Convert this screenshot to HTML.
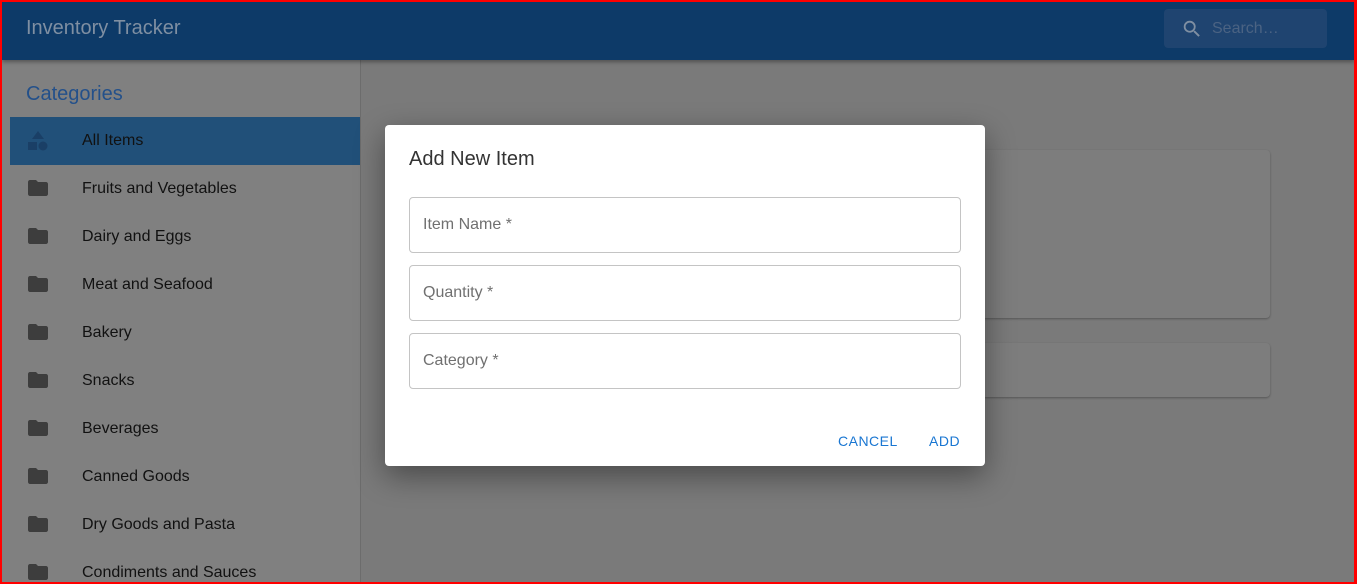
<!DOCTYPE html>
<html><head><style>
*{box-sizing:border-box;margin:0;padding:0}
body{width:1357px;height:584px;overflow:hidden;background:#fff;font-family:"Liberation Sans",sans-serif;position:relative}
.frame{position:absolute;inset:0;border:2px solid #f00;border-right-width:3px;z-index:10;pointer-events:none}
.page{position:absolute;left:2px;top:2px;width:1353px;height:580px;background:#7a7a7a;overflow:hidden}
.hdr{position:absolute;left:0;top:0;width:100%;height:58px;background:#0d3a68;box-shadow:0 2px 4px rgba(0,0,0,.35);z-index:2}
.hdr h1{position:absolute;left:24px;top:15px;font-size:20px;font-weight:normal;color:#7f8fa2}
.search{position:absolute;left:1162px;top:7px;width:163px;height:39px;background:#1f4470;border-radius:4px}
.search span{position:absolute;left:48px;top:11px;font-size:16px;color:#4b6383}
.search svg{position:absolute;left:17px;top:9px}
.side{position:absolute;left:0;top:58px;width:359px;height:530px;background:#808080;border-right:1px solid #6c6c6c}
.side h2{position:absolute;left:24px;top:23px;font-size:20px;font-weight:normal;color:#23508a}
.item{position:absolute;left:8px;width:350px;height:48px;font-size:16px;color:#111}
.item span{position:absolute;left:72px;top:15px}
.item svg{position:absolute;left:18px;top:15px}
.sel{background:#215079}
.card{position:absolute;background:#7d7d7d;border-radius:4px;box-shadow:0 1px 2px rgba(0,0,0,.3)}
.dlg{position:absolute;left:383px;top:123px;width:600px;height:341px;background:#fff;border-radius:4px;box-shadow:0 10px 30px rgba(0,0,0,.4);z-index:3}
.dlg h3{position:absolute;left:24px;top:23px;font-size:20px;font-weight:normal;color:#333}
.fld{position:absolute;left:24px;width:552px;height:56px;border:1px solid #c4c4c4;border-radius:4px}
.fld span{position:absolute;left:13px;top:18px;font-size:16px;color:#707070}
.btn{position:absolute;top:308px;font-size:14px;letter-spacing:.5px;color:#1976d2}
</style></head><body>
<div class="frame"></div>
<div class="page">
<div class="hdr"><h1>Inventory Tracker</h1>
<div class="search"><svg width="22" height="22" viewBox="0 0 24 24"><path fill="#7f8fa2" d="M15.5 14h-.79l-.28-.27A6.470 6.470 0 0016 9.5 6.5 6.5 0 109.5 16c1.61 0 3.09-.59 4.23-1.57l.27.28v.79l5 4.99L20.49 19zm-6 0C7.01 14 5 11.990 5 9.5S7.01 5 9.5 5 14 7.01 14 9.5 11.99 14 9.5 14"/></svg><span>Search…</span></div></div>
<div class="side"><h2>Categories</h2></div>
<div class="item sel" style="top:115px"><svg width="20" height="20" viewBox="0 0 20 20" style="top:14px"><path fill="#1a3f66" d="M10 0l6 8H4z"/><rect x="0" y="11" width="9" height="8" fill="#1a3f66"/><circle cx="15" cy="15" r="4.5" fill="#1a3f66"/></svg><span>All Items</span></div>
<div class="item" style="top:163px"><svg width="20" height="16" viewBox="0 0 20 16"><path fill="#3d3d3d" d="M8 0H2C.9 0 0 .9 0 2v12c0 1.1.9 2 2 2h16c1.1 0 2-.9 2-2V4c0-1.1-.9-2-2-2h-8z"/></svg><span>Fruits and Vegetables</span></div>
<div class="item" style="top:211px"><svg width="20" height="16" viewBox="0 0 20 16"><path fill="#3d3d3d" d="M8 0H2C.9 0 0 .9 0 2v12c0 1.1.9 2 2 2h16c1.1 0 2-.9 2-2V4c0-1.1-.9-2-2-2h-8z"/></svg><span>Dairy and Eggs</span></div>
<div class="item" style="top:259px"><svg width="20" height="16" viewBox="0 0 20 16"><path fill="#3d3d3d" d="M8 0H2C.9 0 0 .9 0 2v12c0 1.1.9 2 2 2h16c1.1 0 2-.9 2-2V4c0-1.1-.9-2-2-2h-8z"/></svg><span>Meat and Seafood</span></div>
<div class="item" style="top:307px"><svg width="20" height="16" viewBox="0 0 20 16"><path fill="#3d3d3d" d="M8 0H2C.9 0 0 .9 0 2v12c0 1.1.9 2 2 2h16c1.1 0 2-.9 2-2V4c0-1.1-.9-2-2-2h-8z"/></svg><span>Bakery</span></div>
<div class="item" style="top:355px"><svg width="20" height="16" viewBox="0 0 20 16"><path fill="#3d3d3d" d="M8 0H2C.9 0 0 .9 0 2v12c0 1.1.9 2 2 2h16c1.1 0 2-.9 2-2V4c0-1.1-.9-2-2-2h-8z"/></svg><span>Snacks</span></div>
<div class="item" style="top:403px"><svg width="20" height="16" viewBox="0 0 20 16"><path fill="#3d3d3d" d="M8 0H2C.9 0 0 .9 0 2v12c0 1.1.9 2 2 2h16c1.1 0 2-.9 2-2V4c0-1.1-.9-2-2-2h-8z"/></svg><span>Beverages</span></div>
<div class="item" style="top:451px"><svg width="20" height="16" viewBox="0 0 20 16"><path fill="#3d3d3d" d="M8 0H2C.9 0 0 .9 0 2v12c0 1.1.9 2 2 2h16c1.1 0 2-.9 2-2V4c0-1.1-.9-2-2-2h-8z"/></svg><span>Canned Goods</span></div>
<div class="item" style="top:499px"><svg width="20" height="16" viewBox="0 0 20 16"><path fill="#3d3d3d" d="M8 0H2C.9 0 0 .9 0 2v12c0 1.1.9 2 2 2h16c1.1 0 2-.9 2-2V4c0-1.1-.9-2-2-2h-8z"/></svg><span>Dry Goods and Pasta</span></div>
<div class="item" style="top:547px"><svg width="20" height="16" viewBox="0 0 20 16"><path fill="#3d3d3d" d="M8 0H2C.9 0 0 .9 0 2v12c0 1.1.9 2 2 2h16c1.1 0 2-.9 2-2V4c0-1.1-.9-2-2-2h-8z"/></svg><span>Condiments and Sauces</span></div>
<div class="card" style="left:400px;top:148px;width:868px;height:168px"></div>
<div class="card" style="left:400px;top:341px;width:868px;height:54px"></div>
<div class="dlg"><h3>Add New Item</h3>
<div class="fld" style="top:72px"><span>Item Name *</span></div>
<div class="fld" style="top:140px"><span>Quantity *</span></div>
<div class="fld" style="top:208px"><span>Category *</span></div>
<div class="btn" style="left:453px">CANCEL</div>
<div class="btn" style="left:544px">ADD</div>
</div>
</div>
</body></html>
